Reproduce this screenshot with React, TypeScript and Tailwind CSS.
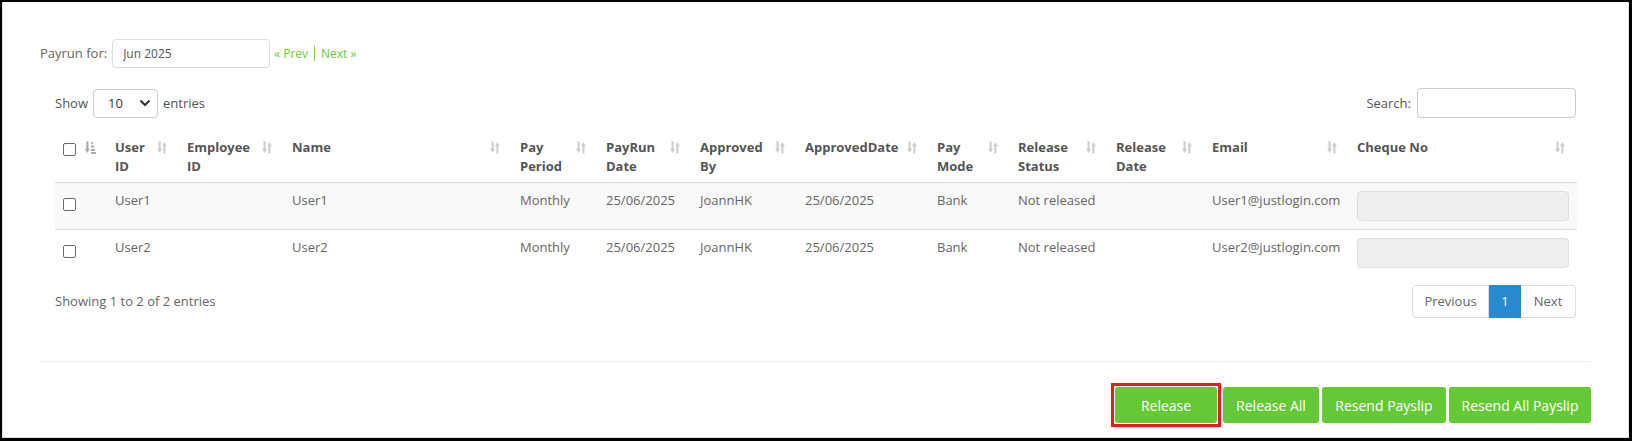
import React from 'react';

type Row = {
  userId: string;
  employeeId: string;
  name: string;
  payPeriod: string;
  payRunDate: string;
  approvedBy: string;
  approvedDate: string;
  payMode: string;
  releaseStatus: string;
  releaseDate: string;
  email: string;
};

const rows: Row[] = [
  {
    userId: 'User1',
    employeeId: '',
    name: 'User1',
    payPeriod: 'Monthly',
    payRunDate: '25/06/2025',
    approvedBy: 'JoannHK',
    approvedDate: '25/06/2025',
    payMode: 'Bank',
    releaseStatus: 'Not released',
    releaseDate: '',
    email: 'User1@justlogin.com',
  },
  {
    userId: 'User2',
    employeeId: '',
    name: 'User2',
    payPeriod: 'Monthly',
    payRunDate: '25/06/2025',
    approvedBy: 'JoannHK',
    approvedDate: '25/06/2025',
    payMode: 'Bank',
    releaseStatus: 'Not released',
    releaseDate: '',
    email: 'User2@justlogin.com',
  },
];

const SortIcon = () => (
  <svg width="10" height="13" viewBox="0 0 10 13" className="mt-[3px] shrink-0">
    <path d="M2.6 0.5V9" stroke="#cfcfcf" strokeWidth="2.2" />
    <path d="M0 7.8L2.6 12L5.2 7.8Z" fill="#cfcfcf" />
    <path d="M7.4 12.5V4" stroke="#cfcfcf" strokeWidth="2.2" />
    <path d="M4.8 5.2L7.4 1L10 5.2Z" fill="#cfcfcf" />
  </svg>
);

const SortAscIcon = () => (
  <svg width="11" height="13" viewBox="0 0 11 13" className="mt-[3px] shrink-0">
    <path d="M2.4 0.5V9" stroke="#aaaaaa" strokeWidth="2.2" />
    <path d="M0 7.8L2.4 12L4.8 7.8Z" fill="#aaaaaa" />
    <rect x="6" y="1" width="2" height="2" fill="#aaaaaa" />
    <rect x="6" y="4.5" width="3" height="2" fill="#aaaaaa" />
    <rect x="6" y="8" width="4" height="2" fill="#aaaaaa" />
    <rect x="6" y="11" width="5" height="2" fill="#aaaaaa" />
  </svg>
);

const Checkbox = ({ className = '' }: { className?: string }) => (
  <input
    type="checkbox"
    className={`appearance-none block w-[13px] h-[13px] border border-[#6b6b6b] rounded-[2px] bg-white ${className}`}
  />
);

const headers: { label: React.ReactNode; col: string }[] = [
  { label: <>User<br />ID</>, col: 'w-[72px]' },
  { label: <>Employee<br />ID</>, col: 'w-[105px]' },
  { label: 'Name', col: 'w-[228px]' },
  { label: <>Pay<br />Period</>, col: 'w-[86px]' },
  { label: <>PayRun<br />Date</>, col: 'w-[94px]' },
  { label: <>Approved<br />By</>, col: 'w-[105px]' },
  { label: 'ApprovedDate', col: 'w-[132px]' },
  { label: <>Pay<br />Mode</>, col: 'w-[81px]' },
  { label: <>Release<br />Status</>, col: 'w-[98px]' },
  { label: <>Release<br />Date</>, col: 'w-[96px]' },
  { label: 'Email', col: 'w-[145px]' },
  { label: 'Cheque No', col: 'w-[228px]' },
];

const App: React.FC = () => {
  return (
    <div className="w-[1632px] h-[441px] bg-white border-t-2 border-l-2 border-r-[3px] border-b-[3px] border-black font-['Open_Sans',sans-serif] text-[13px] leading-[19px] text-[#666]">
      <div className="h-full border-l border-r border-b border-[#dfe2e6] px-[37px] pt-[37px]">
        {/* Payrun selector */}
        <div className="flex items-center h-[29px]">
          <span className="text-[#666]">Payrun for:</span>
          <input
            type="text"
            defaultValue="Jun 2025"
            className="ml-[5px] w-[158px] h-[29px] border border-[#ddd] rounded-[4px] pl-[10px] text-[12px] text-[#555] outline-none"
          />
          <div className="ml-[4px] flex items-center text-[12px] text-[#6cc93a]">
            <span>« Prev</span>
            <span className="mx-[6px] w-px h-[15px] bg-[#7ccf4e]"></span>
            <span>Next »</span>
          </div>
        </div>

        {/* Table block */}
        <div className="px-[15px] mt-[20px]">
          <div className="flex items-center justify-between h-[30px]">
            <div className="flex items-center text-[#555]">
              <span>Show</span>
              <div className="ml-[5px] w-[65px] h-[29px] border border-[#ccc] rounded-[4px] flex items-center justify-between pl-[14px] pr-[6px] text-[#333]">
                <span>10</span>
                <svg width="12" height="8" viewBox="0 0 12 8">
                  <path d="M1.5 1.5L6 6L10.5 1.5" stroke="#333" strokeWidth="2" fill="none" />
                </svg>
              </div>
              <span className="ml-[5px]">entries</span>
            </div>
            <div className="flex items-center text-[#555]">
              <span>Search:</span>
              <input
                type="text"
                className="ml-[6px] w-[159px] h-[30px] border border-[#ccc] rounded-[4px] outline-none"
              />
            </div>
          </div>

          <table className="mt-[10px] w-full table-fixed border-collapse">
            <colgroup>
              <col className="w-[52px]" />
              {headers.map((h, i) => (
                <col key={i} className={h.col} />
              ))}
            </colgroup>
            <thead>
              <tr>
                <th className="text-left align-top pt-[10px] pb-[6px] pl-2 border-b border-[#ddd]">
                  <div className="flex items-start gap-[9px]">
                    <Checkbox className="mt-[5px]" />
                    <SortAscIcon />
                  </div>
                </th>
                {headers.map((h, i) => (
                  <th
                    key={i}
                    className="text-left align-top pt-[10px] pb-[6px] pl-2 pr-3 border-b border-[#ddd] font-bold text-[#555]"
                  >
                    <div className="flex items-start justify-between gap-1">
                      <span>{h.label}</span>
                      <SortIcon />
                    </div>
                  </th>
                ))}
              </tr>
            </thead>
            <tbody>
              {rows.map((r, i) => (
                <tr
                  key={r.userId}
                  className={`${i === 0 ? 'bg-[#f9f9f9]' : 'bg-white'} ${i < rows.length - 1 ? 'border-b border-[#ddd]' : ''}`}
                >
                  <td className="align-top px-2 py-2">
                    <Checkbox className="mt-[7px]" />
                  </td>
                  <td className="align-top px-2 py-2">{r.userId}</td>
                  <td className="align-top px-2 py-2">{r.employeeId}</td>
                  <td className="align-top px-2 py-2">{r.name}</td>
                  <td className="align-top px-2 py-2">{r.payPeriod}</td>
                  <td className="align-top px-2 py-2">{r.payRunDate}</td>
                  <td className="align-top px-2 py-2">{r.approvedBy}</td>
                  <td className="align-top px-2 py-2">{r.approvedDate}</td>
                  <td className="align-top px-2 py-2">{r.payMode}</td>
                  <td className="align-top px-2 py-2">{r.releaseStatus}</td>
                  <td className="align-top px-2 py-2">{r.releaseDate}</td>
                  <td className="align-top px-2 py-2 whitespace-nowrap">{r.email}</td>
                  <td className="align-top px-2 py-2">
                    <div className="h-[30px] w-full rounded-[4px] border border-[#ddd] bg-[#eee]"></div>
                  </td>
                </tr>
              ))}
            </tbody>
          </table>

          <div className="mt-[9px] flex items-center justify-between">
            <span className="text-[#666]">Showing 1 to 2 of 2 entries</span>
            <div className="flex h-[33px] text-[13px]">
              <span className="w-[77px] flex items-center justify-center border border-[#ddd] rounded-l-[4px] text-[#666]">
                Previous
              </span>
              <span className="w-[32px] flex items-center justify-center bg-[#2a8ad0] border border-[#2a8ad0] text-white">
                1
              </span>
              <span className="w-[55px] flex items-center justify-center border border-l-0 border-[#ddd] rounded-r-[4px] text-[#666]">
                Next
              </span>
            </div>
          </div>
        </div>

        <div className="mt-[43px] h-px bg-[#eee]"></div>

        {/* Actions */}
        <div className="mt-[21px] flex items-center justify-end text-[14px] text-white">
          <div className="border-[3px] border-[#e41e1e] p-px">
            <button className="w-[102px] h-[36px] rounded-[3px] bg-[#65c935]">Release</button>
          </div>
          <button className="ml-[2px] w-[96px] h-[36px] rounded-[3px] bg-[#65c935]">Release All</button>
          <button className="ml-[3px] w-[124px] h-[36px] rounded-[3px] bg-[#65c935]">Resend Payslip</button>
          <button className="ml-[3px] w-[142px] h-[36px] rounded-[3px] bg-[#65c935]">Resend All Payslip</button>
        </div>
      </div>
    </div>
  );
};

export default App;
